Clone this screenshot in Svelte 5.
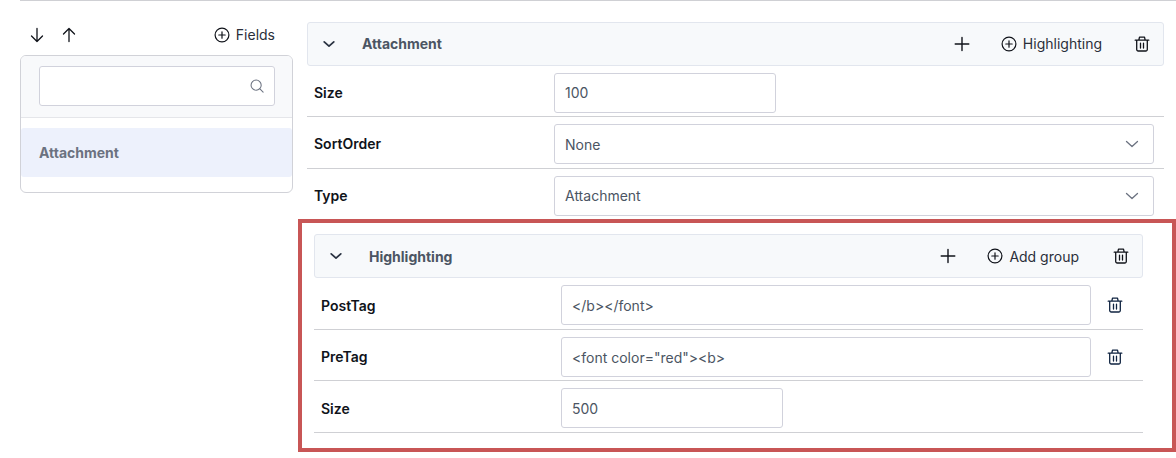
<script>
  const mainRows = [
    { label: 'Size', value: '100', kind: 'short' },
    { label: 'SortOrder', value: 'None', kind: 'select' },
    { label: 'Type', value: 'Attachment', kind: 'select' }
  ];
  const tagRows = [
    { label: 'PostTag', value: '</b></font>', kind: 'tag' },
    { label: 'PreTag', value: '<font color="red"><b>', kind: 'tag' },
    { label: 'Size', value: '500', kind: 'short' }
  ];
</script>

{#snippet chevron(cls)}
  <svg class={cls} width="16" height="16" viewBox="0 0 16 16" fill="none" stroke="currentColor" stroke-linecap="round" stroke-linejoin="round"><path d="M2.5 5.5 8 10.5l5.500-5" /></svg>
{/snippet}
{#snippet plusCircle()}
  <svg width="16" height="16" viewBox="0 0 16 16" fill="none" stroke="currentColor" stroke-width="1.2" stroke-linecap="round"><circle cx="8" cy="8" r="6.9" /><path d="M8 4.800v6.400M4.800 8h6.400" /></svg>
{/snippet}
{#snippet plus()}
  <svg width="16" height="16" viewBox="0 0 16 16" fill="none" stroke="currentColor" stroke-width="1.400" stroke-linecap="round"><path d="M8 1.500v13M1.200 8h13.600" /></svg>
{/snippet}
{#snippet trash()}
  <svg width="16" height="16" viewBox="0 0 16 16" fill="none" stroke="currentColor" stroke-width="1.300" stroke-linecap="round" stroke-linejoin="round"><path d="M1.200 4.200h13.600M4.800 4.200l.7-3h5l.7 3M2.700 4.200v9.300A1.500 1.500 0 0 0 4.200 15h7.600a1.500 1.500 0 0 0 1.500-1.500V4.200M6.500 7.200v4.800M9.500 7.200v4.800" /></svg>
{/snippet}
{#snippet row(r)}
  <div class="row">
    <span class="label">{r.label}</span>
    <div class="field {r.kind}">
      <span>{r.value}</span>
      {#if r.kind === 'select'}{@render chevron('select-chevron')}{/if}
    </div>
    {#if r.kind === 'tag'}<button class="row-trash" aria-label="Delete">{@render trash()}</button>{/if}
  </div>
{/snippet}

<div class="page">
  <aside class="left">
    <div class="tools">
      <svg width="16" height="16" viewBox="0 0 16 16" fill="none" stroke="currentColor" stroke-width="1.300" stroke-linecap="round" stroke-linejoin="round"><path d="M8 1.500V14.500M2.500 9 8 14.500 13.500 9" /></svg>
      <svg width="16" height="16" viewBox="0 0 16 16" fill="none" stroke="currentColor" stroke-width="1.300" stroke-linecap="round" stroke-linejoin="round"><path d="M8 14.500V1.500M2.500 7 8 1.500 13.500 7" /></svg>
      <span class="fields">{@render plusCircle()}<span>Fields</span></span>
    </div>
    <div class="panel">
      <div class="search-area">
        <div class="search">
          <svg width="14" height="14" viewBox="0 0 16 16" fill="none" stroke="currentColor" stroke-width="1.200" stroke-linecap="round"><circle cx="7" cy="7" r="5.800" /><path d="m11.300 11.300 3.700 3.700" /></svg>
        </div>
      </div>
      <div class="item">Attachment</div>
    </div>
  </aside>

  <main class="right">
    <header class="bar">
      {@render chevron('bar-chevron')}
      <span class="title">Attachment</span>
      <span class="plus">{@render plus()}</span>
      <span class="action">{@render plusCircle()}<span>Highlighting</span></span>
      <span class="bar-trash">{@render trash()}</span>
    </header>
    {#each mainRows as r}{@render row(r)}{/each}

    <section class="nested">
      <div class="annotation"></div>
      <header class="bar">
        {@render chevron('bar-chevron')}
        <span class="title">Highlighting</span>
        <span class="plus">{@render plus()}</span>
        <span class="action">{@render plusCircle()}<span>Add group</span></span>
        <span class="bar-trash">{@render trash()}</span>
      </header>
      {#each tagRows as r}{@render row(r)}{/each}
    </section>
  </main>
</div>

<style>
  :global(body) { margin: 0; background: #fff; }
  .page {
    width: 1156px;
    height: 457px;
    margin-left: 20px;
    border-top: 1px solid #cfd0d4;
    display: grid;
    grid-template-columns: 273px 857px;
    column-gap: 14px;
    font-family: Inter, "Liberation Sans", sans-serif;
    font-size: 14px;
    color: #1f2430;
    overflow: hidden;
    position: relative;
  }
  svg { display: block; flex: none; }
  .tools {
    height: 54px;
    box-sizing: border-box;
    padding: 26px 18px 0 9px;
    display: flex;
    align-items: flex-start;
    gap: 16px;
    color: #10131a;
  }
  .fields { margin-left: auto; display: flex; align-items: center; gap: 6px; color: #2a2f3a; line-height: 16px; }
  .fields svg { color: #10131a; }
  .panel {
    height: 138px;
    box-sizing: border-box;
    border: 1px solid #d1d2d8;
    border-radius: 6px;
    overflow: hidden;
  }
  .search-area {
    height: 62px;
    box-sizing: border-box;
    background: #f8f9fb;
    border-bottom: 1px solid #e5e6ea;
    padding: 10px 17px 0 18px;
  }
  .search {
    height: 40px;
    box-sizing: border-box;
    background: #fff;
    border: 1px solid #d1d2dc;
    border-radius: 3px;
    display: flex;
    align-items: center;
    justify-content: flex-end;
    padding-right: 10px;
    color: #6b7280;
  }
  .item {
    margin-top: 10px;
    height: 49px;
    box-sizing: border-box;
    padding-left: 18px;
    background: #edf1fc;
    border-radius: 3px;
    display: flex;
    align-items: center;
    font-weight: 700;
    color: #6b7280;
  }
  .right { padding-top: 20.670px; }
  .bar {
    height: 44px;
    box-sizing: border-box;
    border: 1px solid #e2e6ee;
    border-radius: 3px;
    background: #f7f9fb;
    display: flex;
    align-items: center;
    color: #10131a;
  }
  .bar :global(.bar-chevron) { margin-left: 14px; width: 14px; height: 14px; stroke-width: 2; color: #2a3342; }
  .title { margin-left: 26px; font-weight: 700; color: #4b5563; }
  .plus { margin-left: auto; }
  .action { margin-left: 31px; display: flex; align-items: center; gap: 6px; color: #2a2f3a; }
  .action svg { color: #10131a; }
  .bar-trash { margin-left: 32px; margin-right: 13px; }
  .nested .bar-trash { margin-left: 34px; }
  .nested .title, .nested .action span { padding-top: 0.900px; }
  .row {
    height: 51.670px;
    box-sizing: border-box;
    padding: 7px 0 3.670px 7px;
    border-bottom: 1px solid #cfd0d4;
    display: flex;
    align-items: flex-start;
  }
  .label { width: 240px; flex: none; line-height: 40px; font-weight: 600; color: #10131a; }
  .nested .label { padding-top: 0.500px; }
  .field {
    height: 40px;
    box-sizing: border-box;
    border: 1px solid #d1d2dc;
    border-radius: 3px;
    padding: 0 13px 0 10px;
    display: flex;
    align-items: center;
    justify-content: space-between;
    color: #4b5563;
    background: #fff;
  }
  .nested .field { padding-top: 0.900px; }
  .short { width: 222px; }
  .select { width: 600px; }
  .tag { width: 530px; }
  .field :global(.select-chevron) { color: #6b7280; stroke-width: 1.300; }
  .row-trash {
    all: unset;
    margin: 12px 0 0 16px;
    color: #0f2340;
  }
  .nested { position: relative; margin: 13.430px 21px 0 7px; }
  .annotation {
    position: absolute;
    left: -16px;
    right: -33px;
    top: -15px;
    bottom: -19px;
    border: 4px solid #c85656;
    pointer-events: none;
  }
</style>
